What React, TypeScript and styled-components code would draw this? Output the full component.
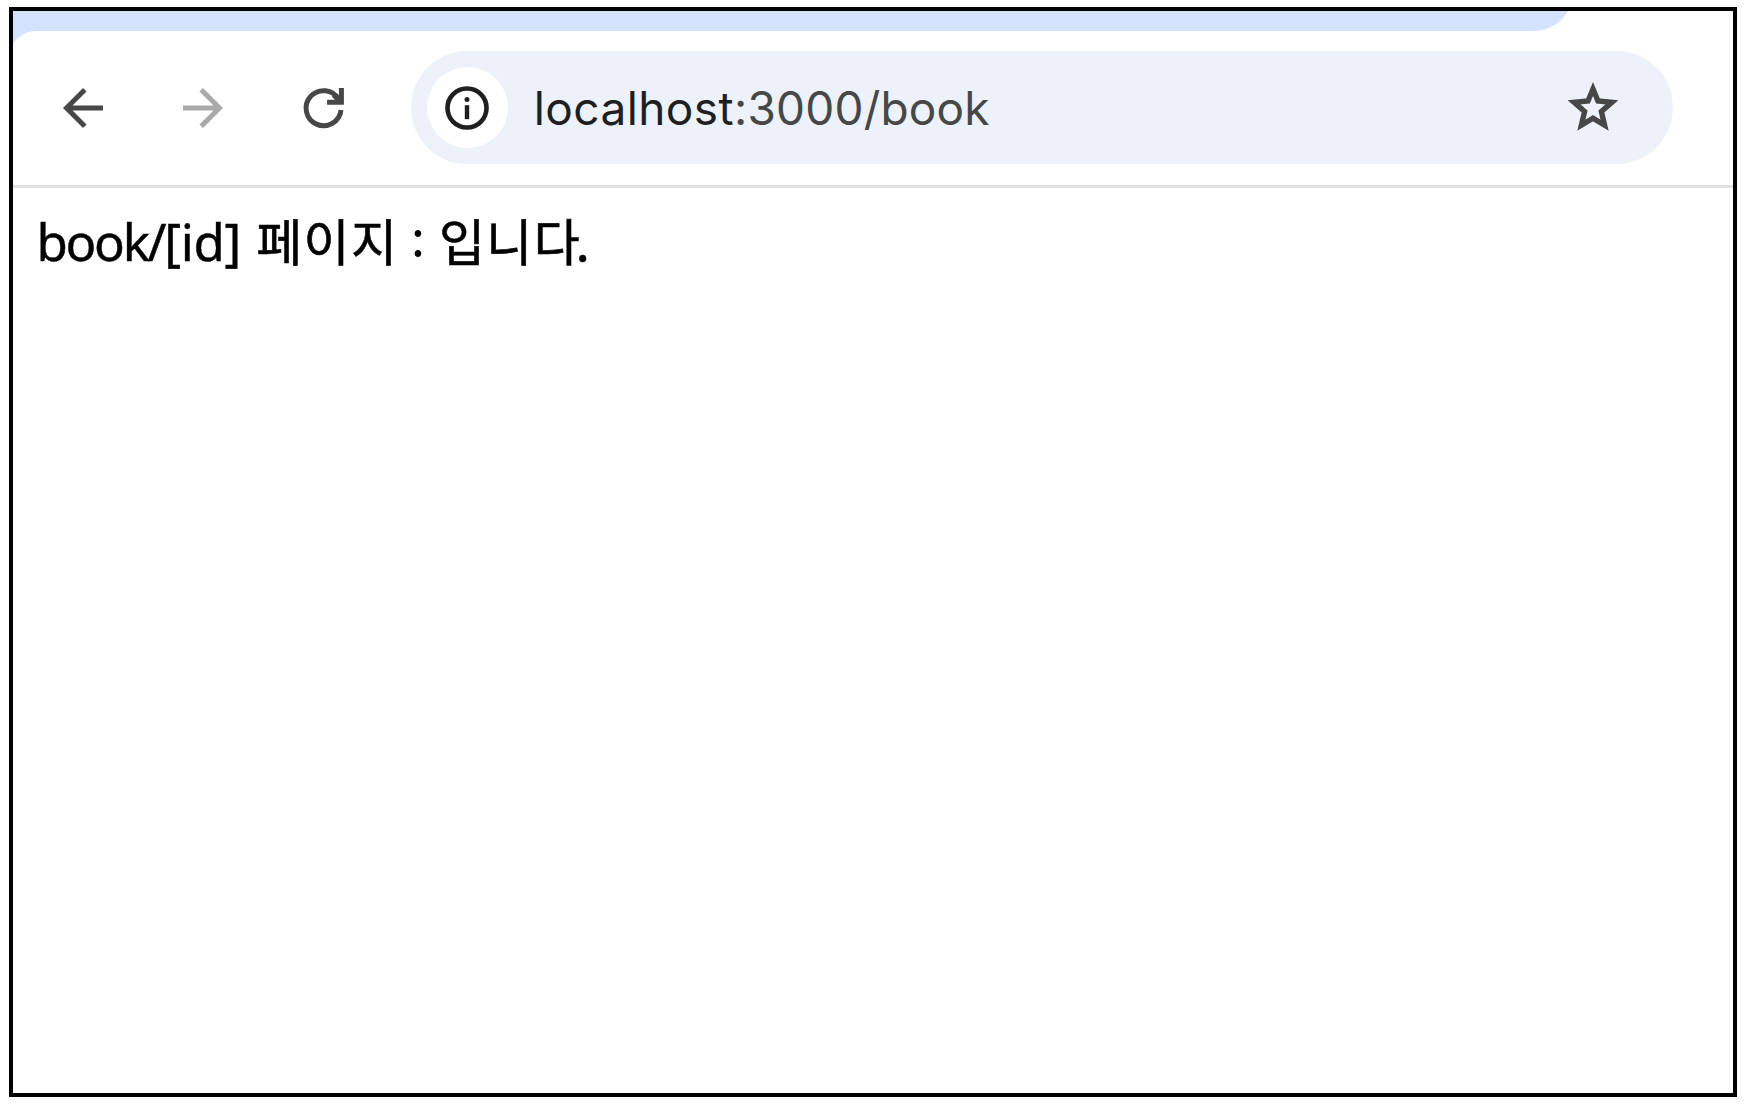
import React from 'react';
import styled, { createGlobalStyle } from 'styled-components';

const GlobalStyle = createGlobalStyle`
  * {
    box-sizing: border-box;
  }

  body {
    margin: 0;
    background: #fff;
  }
`;

const Page = styled.div`
  width: 1750px;
  height: 1108px;
  padding: 7px 13px 11px 9px;
`;

const Window = styled.div`
  height: 1090px;
  border: 4px solid #000;
  overflow: hidden;
  background: #fff;
`;

const TabStrip = styled.div`
  width: 1560px;
  height: 60px;
  margin-top: -40px;
  border-bottom-right-radius: 39px;
  background: #d3e3fd;
`;

const ToolbarCorner = styled.div`
  height: 27px;
  margin: 0 0 -27px -4px;
  background: linear-gradient(to right, #d3e3fd 40px, #fff 40px);
`;

const Toolbar = styled.div`
  position: relative;
  display: flex;
  align-items: center;
  height: 157px;
  margin-left: -4px;
  padding: 0 60px 0.5px 44.3px;
  border-top-left-radius: 27px;
  border-bottom: 3px solid #e1e1e1;
  background: #fff;
`;

const NavButton = styled.button<{ $disabled?: boolean }>`
  display: flex;
  width: 60px;
  height: 60px;
  margin-right: 60px;
  padding: 0;
  border: 0;
  background: none;
  color: ${({ $disabled }) => ($disabled ? '#a9a9a9' : '#474747')};
`;

const Omnibox = styled.div`
  display: flex;
  align-items: center;
  width: 1262px;
  height: 113px;
  margin-left: -2.5px;
  padding: 0 50px 0 16px;
  border-radius: 57px;
  background: #ecf1fa;
`;

const SiteInfo = styled.div`
  display: flex;
  align-items: center;
  justify-content: center;
  width: 81px;
  height: 81px;
  border-radius: 50%;
  background: #fff;
  color: #1f1f1f;
`;

const Url = styled.div`
  flex: 1;
  padding-left: 26px;
  font-family: Inter, sans-serif;
  font-size: 46px;
  line-height: 60px;
  letter-spacing: 0.2px;
  color: #474747;
`;

const Host = styled.span`
  letter-spacing: 0.4px;
  color: #1f1f1f;
`;

const Content = styled.div`
  padding: 13px 24px 13px 23.5px;
  font-family: 'Noto Sans', 'Noto Sans CJK KR', sans-serif;
  font-size: 51px;
  line-height: 76px;
  letter-spacing: -0.4px;
  color: #000;
  -webkit-text-stroke: 0.4px #000;
`;

const Segment = styled.span`
  letter-spacing: -2.3px;
`;

const Korean = styled.span`
  margin-left: 2.5px;
  font-family: 'Noto Sans CJK KR', sans-serif;
  font-size: 50px;
  letter-spacing: 1.4px;
  -webkit-text-stroke: 0.6px #000;
`;

const Colon = styled.span`
  vertical-align: 5px;
  line-height: 1;
  -webkit-text-stroke: 0;
`;

const Ending = styled.span`
  letter-spacing: -4px;
`;

const BackIcon = () => (
  <svg width="60" height="60" viewBox="0 0 24 24" fill="currentColor">
    <path d="M20 11H7.83l5.59-5.59L12 4l-8 8 8 8 1.41-1.41L7.83 13H20v-2z" />
  </svg>
);

const ForwardIcon = () => (
  <svg width="60" height="60" viewBox="0 0 24 24" fill="currentColor">
    <path d="M4 11h12.17l-5.59-5.59L12 4l8 8-8 8-1.41-1.41L16.17 13H4v-2z" />
  </svg>
);

const ReloadIcon = () => (
  <svg width="60" height="60" viewBox="0 0 60 60" fill="none" stroke="currentColor" strokeWidth="5">
    <path d="M48 32A17.5 17.5 0 1 1 45.8 21.5" />
    <path d="M48.4 10V24.2H34.1" />
    <path d="M40.6 17L47.6 24" />
  </svg>
);

const InfoIcon = () => (
  <svg width="44" height="44" viewBox="0 0 44 44" fill="none">
    <circle cx="22" cy="22" r="19.5" stroke="currentColor" strokeWidth="4.6" />
    <circle cx="22" cy="13.4" r="2.5" fill="currentColor" />
    <path d="M22 19.2V33.2" stroke="currentColor" strokeWidth="4.4" />
  </svg>
);

const StarIcon = () => (
  <svg width="60" height="60" viewBox="0 0 60 60" fill="none" stroke="currentColor" strokeWidth="5.4">
    <path d="M30 11L35 23L48.9 24.3L38.4 33.5L41.6 47.2L30 40.1L18.4 47.2L21.6 33.5L11.1 24.3L25 23Z" />
  </svg>
);

const Bookmark = styled.div`
  display: flex;
  color: #474747;
`;

export default function App() {
  return (
    <Page>
      <GlobalStyle />
      <Window>
        <TabStrip />
        <ToolbarCorner />
        <Toolbar>
          <NavButton aria-label="Back">
            <BackIcon />
          </NavButton>
          <NavButton aria-label="Forward" $disabled>
            <ForwardIcon />
          </NavButton>
          <NavButton aria-label="Reload">
            <ReloadIcon />
          </NavButton>
          <Omnibox>
            <SiteInfo>
              <InfoIcon />
            </SiteInfo>
            <Url>
              <Host>localhost</Host>:3000/book
            </Url>
            <Bookmark>
              <StarIcon />
            </Bookmark>
          </Omnibox>
        </Toolbar>
        <Content>
          <Segment>book/</Segment>[id]{' '}
          <Korean>
            페이지 <Colon>:</Colon> 입니<Ending>다.</Ending>
          </Korean>
        </Content>
      </Window>
    </Page>
  );
}
